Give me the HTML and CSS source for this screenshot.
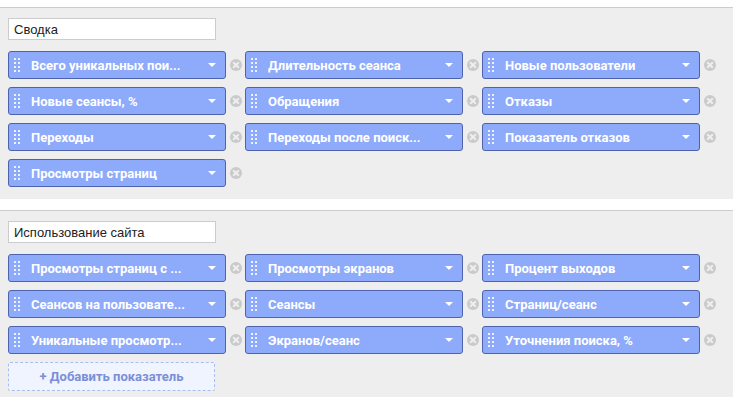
FILE: index.html
```html
<!DOCTYPE html>
<html lang="ru">
<head>
    <meta charset="UTF-8">
    <title>Показатели</title>
    <link rel="stylesheet" href="styles.css">
</head>
<body>
    <div class="group first">
        <input class="group-name" type="text" value="Сводка">
        <div class="metrics">
            <div class="metric-cell"><div class="metric" title="Всего уникальных поисков"><span class="handle"></span><span class="metric-name">Всего уникальных пои...</span><span class="arrow"></span></div><span class="remove"></span></div>
            <div class="metric-cell"><div class="metric"><span class="handle"></span><span class="metric-name">Длительность сеанса</span><span class="arrow"></span></div><span class="remove"></span></div>
            <div class="metric-cell"><div class="metric"><span class="handle"></span><span class="metric-name">Новые пользователи</span><span class="arrow"></span></div><span class="remove"></span></div>
            <div class="metric-cell"><div class="metric"><span class="handle"></span><span class="metric-name">Новые сеансы, %</span><span class="arrow"></span></div><span class="remove"></span></div>
            <div class="metric-cell"><div class="metric"><span class="handle"></span><span class="metric-name">Обращения</span><span class="arrow"></span></div><span class="remove"></span></div>
            <div class="metric-cell"><div class="metric"><span class="handle"></span><span class="metric-name">Отказы</span><span class="arrow"></span></div><span class="remove"></span></div>
            <div class="metric-cell"><div class="metric"><span class="handle"></span><span class="metric-name">Переходы</span><span class="arrow"></span></div><span class="remove"></span></div>
            <div class="metric-cell"><div class="metric" title="Переходы после поиска"><span class="handle"></span><span class="metric-name">Переходы после поиск...</span><span class="arrow"></span></div><span class="remove"></span></div>
            <div class="metric-cell"><div class="metric"><span class="handle"></span><span class="metric-name">Показатель отказов</span><span class="arrow"></span></div><span class="remove"></span></div>
            <div class="metric-cell"><div class="metric"><span class="handle"></span><span class="metric-name">Просмотры страниц</span><span class="arrow"></span></div><span class="remove"></span></div>
        </div>
    </div>

    <div class="group">
        <input class="group-name" type="text" value="Использование сайта">
        <div class="metrics">
            <div class="metric-cell"><div class="metric" title="Просмотры страниц с результатами поиска"><span class="handle"></span><span class="metric-name">Просмотры страниц с ...</span><span class="arrow"></span></div><span class="remove"></span></div>
            <div class="metric-cell"><div class="metric"><span class="handle"></span><span class="metric-name">Просмотры экранов</span><span class="arrow"></span></div><span class="remove"></span></div>
            <div class="metric-cell"><div class="metric"><span class="handle"></span><span class="metric-name">Процент выходов</span><span class="arrow"></span></div><span class="remove"></span></div>
            <div class="metric-cell"><div class="metric" title="Сеансов на пользователя"><span class="handle"></span><span class="metric-name">Сеансов на пользовате...</span><span class="arrow"></span></div><span class="remove"></span></div>
            <div class="metric-cell"><div class="metric"><span class="handle"></span><span class="metric-name">Сеансы</span><span class="arrow"></span></div><span class="remove"></span></div>
            <div class="metric-cell"><div class="metric"><span class="handle"></span><span class="metric-name">Страниц/сеанс</span><span class="arrow"></span></div><span class="remove"></span></div>
            <div class="metric-cell"><div class="metric" title="Уникальные просмотры страниц"><span class="handle"></span><span class="metric-name">Уникальные просмотр...</span><span class="arrow"></span></div><span class="remove"></span></div>
            <div class="metric-cell"><div class="metric"><span class="handle"></span><span class="metric-name">Экранов/сеанс</span><span class="arrow"></span></div><span class="remove"></span></div>
            <div class="metric-cell"><div class="metric"><span class="handle"></span><span class="metric-name">Уточнения поиска, %</span><span class="arrow"></span></div><span class="remove"></span></div>
            <button class="add-metric">+ Добавить показатель</button>
        </div>
    </div>
</body>
</html>
```

FILE: styles.css
```css
* {
    box-sizing: border-box;
}

body {
    margin: 0;
    background-color: #fff;
    font-family: Roboto, "Liberation Sans", sans-serif;
}

.group {
    background-color: #eeeeee;
    border-top: 1px solid #cccccc;
    margin-top: 11px;
    padding: 10px 8px 12px;
}

.group.first {
    margin-top: 7px;
}

.group-name {
    display: block;
    width: 208px;
    height: 22px;
    margin: 0 0 11px;
    padding: 0 5px;
    border: 1px solid #cccccc;
    background-color: #fff;
    font-family: "Liberation Sans", Arial, sans-serif;
    font-size: 13px;
    color: #222;
    outline: none;
}

.metrics {
    display: grid;
    grid-template-columns: repeat(3, 237px);
    row-gap: 8px;
}

.metric-cell {
    display: flex;
    align-items: center;
    gap: 4px;
}

.metric {
    display: flex;
    align-items: center;
    width: 218px;
    height: 28px;
    padding: 0 9px 0 5px;
    background-color: #8eaafa;
    border: 1px solid #4f62ac;
    border-radius: 3px;
    color: #fff;
    cursor: move;
}

/* drag handle: 2 x 4 dots */
.handle {
    width: 6px;
    height: 14px;
    margin-right: 11px;
    background-image: radial-gradient(circle, rgba(255, 255, 255, 0.85) 1px, transparent 1.1px);
    background-size: 4px 4px;
    background-position: -1px -1px;
}

.metric-name {
    flex: 1;
    font-size: 13px;
    font-weight: bold;
    white-space: nowrap;
    overflow: hidden;
}

.arrow {
    width: 0;
    height: 0;
    border-left: 4px solid transparent;
    border-right: 4px solid transparent;
    border-top: 4px solid #fff;
}

.remove {
    position: relative;
    width: 12px;
    height: 12px;
    border-radius: 50%;
    background-color: #cacaca;
    cursor: pointer;
}

.remove::before,
.remove::after {
    content: "";
    position: absolute;
    left: 2px;
    top: 5px;
    width: 8px;
    height: 2px;
    background-color: #eee;
    transform: rotate(45deg);
}

.remove::after {
    transform: rotate(-45deg);
}

.add-metric {
    width: 207px;
    height: 29px;
    padding: 0;
    border: 1px dashed #abbdf0;
    border-radius: 2px;
    background-color: #f0f4fe;
    color: #7a8fd8;
    font-family: Roboto, "Liberation Sans", sans-serif;
    font-size: 13px;
    font-weight: bold;
    cursor: pointer;
}
```
